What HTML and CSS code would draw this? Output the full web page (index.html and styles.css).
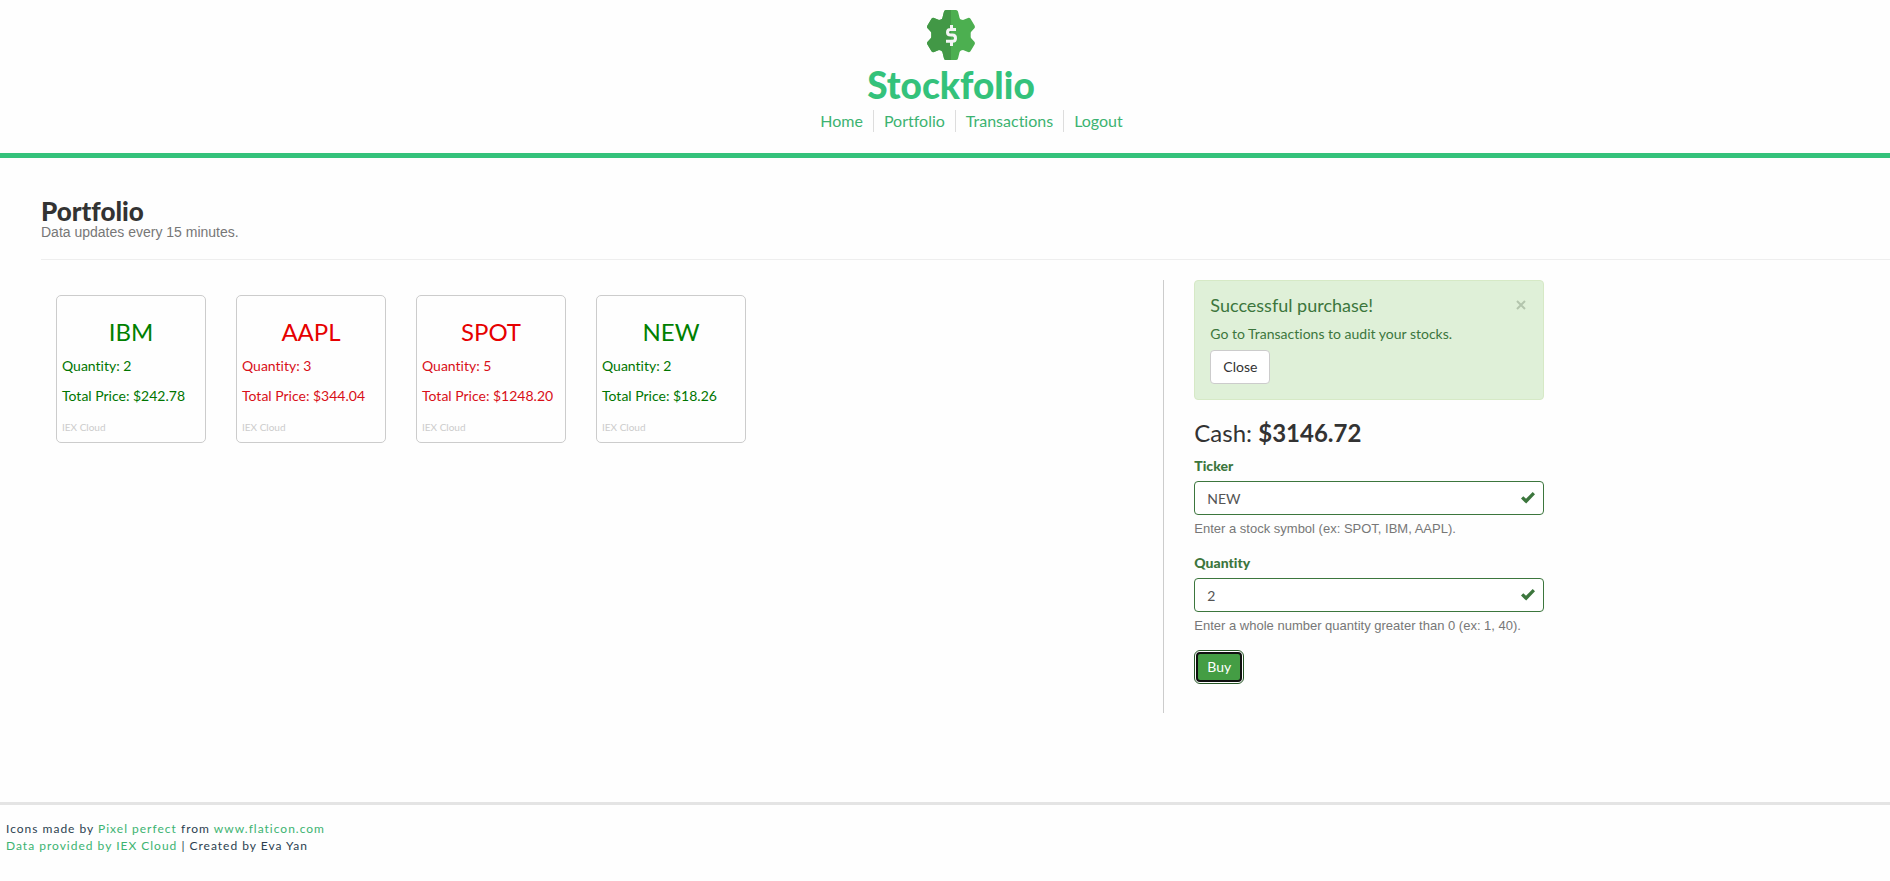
FILE: index.html
```html
<!DOCTYPE html>
<html lang="en">
<head>
<meta charset="utf-8">
<title>Stockfolio</title>
<meta name="viewport" content="width=device-width, initial-scale=1">
<link rel="stylesheet" href="styles.css">
</head>
<body>
<header class="site-header">
  <svg class="logo" viewBox="0 0 50 52" aria-hidden="true">
    <defs><clipPath id="left-half"><rect width="25" height="52"/></clipPath></defs>
    <path id="gear" fill="#4caf50" d="M20 1h10q1.500 0 2 1.500l1.600 6.500q.400 1 1.400 1.500l2 .500 5-2q1.500-.500 2.500.800l4.200 7q.700 1.500-.300 2.500l-3 3.200q-.700.700-.700 1.500v4q0 .800.700 1.500l3 3.200q1 1 .300 2.500l-4.200 7q-1 1.300-2.500.800l-5-2-2 .500q-1 .500-1.400 1.500L32 49.500q-.500 1.500-2 1.500H20q-1.500 0-2-1.500L16.400 43q-.400-1-1.400-1.500l-2-.500-5 2q-1.500.500-2.500-.800l-4.200-7q-.700-1.500.300-2.500l3-3.200q.700-.700.700-1.500v-4q0-.800-.700-1.500l-3-3.200q-1-1-.300-2.500l4.200-7q1-1.300 2.500-.800l5 2 2-.500q1-.500 1.400-1.500L18 2.500q.500-1.500 2-1.500z"/>
    <use href="#gear" clip-path="url(#left-half)" class="gear-shade"/>
    <path fill="none" stroke="#f5f5f5" stroke-width="3" stroke-linejoin="round" d="M30 20.500h-5.500q-3 0-3 2.800t3 2.800h2q3 0 3 3.100t-3 3.100H20M25.500 16v4M25.500 33v4"/>
  </svg>
  <h1 class="brand">Stockfolio</h1>
  <nav>
    <ul class="nav-list">
      <li><a href="#">Home</a></li>
      <li><a href="#">Portfolio</a></li>
      <li><a href="#">Transactions</a></li>
      <li><a href="#">Logout</a></li>
    </ul>
  </nav>
</header>
<main class="page">
  <div class="page-title">
    <h2>Portfolio</h2>
    <p>Data updates every 15 minutes.</p>
  </div>
  <div class="columns">
    <section class="holdings" aria-label="Holdings">
      <article class="card gain"><h3>IBM</h3><p>Quantity: 2</p><p>Total Price: $242.78</p><small>IEX Cloud</small></article>
      <article class="card loss"><h3>AAPL</h3><p>Quantity: 3</p><p>Total Price: $344.04</p><small>IEX Cloud</small></article>
      <article class="card loss"><h3>SPOT</h3><p>Quantity: 5</p><p>Total Price: $1248.20</p><small>IEX Cloud</small></article>
      <article class="card gain"><h3>NEW</h3><p>Quantity: 2</p><p>Total Price: $18.26</p><small>IEX Cloud</small></article>
    </section>
    <section class="trade" aria-label="Buy stocks">
      <div class="alert" role="alert">
        <div class="alert-head">
          <h4>Successful purchase!</h4>
          <button class="dismiss" type="button" aria-label="Dismiss"><svg viewBox="0 0 10 10" aria-hidden="true"><path d="M1 1l8 8M9 1L1 9"/></svg></button>
        </div>
        <p>Go to Transactions to audit your stocks.</p>
        <button class="btn btn-default" type="button">Close</button>
      </div>
      <h3 class="cash">Cash: <strong>$3146.72</strong></h3>
      <form>
        <div class="field">
          <label for="ticker">Ticker</label>
          <div class="control">
            <input id="ticker" type="text" value="NEW">
            <svg class="tick" viewBox="0 0 14 12" aria-hidden="true"><path d="M0 6.500L2.300 4.200 5 6.700 11.700 0 14 2.300 5.200 11.600z"/></svg>
          </div>
          <span class="help">Enter a stock symbol (ex: SPOT, IBM, AAPL).</span>
        </div>
        <div class="field">
          <label for="quantity">Quantity</label>
          <div class="control">
            <input id="quantity" type="text" value="2">
            <svg class="tick" viewBox="0 0 14 12" aria-hidden="true"><path d="M0 6.500L2.300 4.200 5 6.700 11.700 0 14 2.300 5.200 11.600z"/></svg>
          </div>
          <span class="help">Enter a whole number quantity greater than 0 (ex: 1, 40).</span>
        </div>
        <button class="btn btn-buy" type="button">Buy</button>
      </form>
    </section>
  </div>
</main>
<footer class="site-footer">
  <p>Icons made by <a href="#">Pixel perfect</a> from <a href="#">www.flaticon.com</a></p>
  <p><a href="#">Data provided by IEX Cloud</a> | Created by Eva Yan</p>
</footer>
</body>
</html>
```
FILE: styles.css
```css
* { box-sizing: border-box; }

body {
  margin: 0;
  background: #fefefe;
  color: #333;
  font: 400 14px/20px Lato, "Liberation Sans", sans-serif;
  font-variant-ligatures: none;
}

h1, h2, h3, h4, p, ul { margin: 0; }
a { color: #3cb371; text-decoration: none; }
button, input { font: inherit; }

.site-header {
  display: flex;
  flex-direction: column;
  align-items: center;
  padding: 9px 0 21px 12px;
  border-bottom: 5px solid #34c27b;
}
.logo { width: 50px; height: 52px; }
.gear-shade { filter: brightness(0.87); }
.brand {
  margin: 3px 0 4px;
  color: #34c27b;
  font-size: 37px;
  font-weight: 900;
  line-height: 42px;
}
.nav-list {
  display: flex;
  padding: 0 0 0 41px;
  list-style: none;
  font-size: 16px;
  line-height: 22px;
}
.nav-list li { padding: 0 10px; }
.nav-list li + li { border-left: 1px solid #ddd; }

.page { padding: 40px 0 89px 41px; }
.page-title {
  padding-bottom: 18px;
  border-bottom: 1px solid #eee;
}
.page-title h2 { font-size: 26px; font-weight: 900; line-height: 26px; }
.page-title p {
  color: #777;
  font: 14px/17px "Liberation Sans", sans-serif;
}

.columns { display: flex; padding-top: 20px; }
.holdings {
  display: flex;
  flex: 0 0 auto;
  flex-wrap: wrap;
  align-content: flex-start;
  gap: 30px;
  width: 60.7%;
  padding: 15px;
}
.card {
  width: 150px;
  padding: 23px 5px 3px;
  border: 1px solid #ccc;
  border-radius: 5px;
}
.card h3 {
  padding-bottom: 11px;
  font-size: 24px;
  font-weight: 400;
  line-height: 26px;
  text-align: center;
}
.card p { padding-bottom: 10px; white-space: nowrap; }
.card small { display: block; color: #ccc; font-size: 10px; line-height: 23px; }
.gain { color: #007500; }
.loss { color: #d80f18; }
.gain h3 { color: green; }
.loss h3 { color: #e60000; }

.trade {
  flex: 1;
  padding: 0 30px 29px;
  border-left: 1px solid #ccc;
}
.alert, .trade form { max-width: 350px; }
.alert {
  padding: 15px;
  background: #dff0d8;
  border: 1px solid #d6e9c6;
  border-radius: 4px;
  color: #3c763d;
}
.alert-head { display: flex; justify-content: space-between; }
.alert h4 { padding-bottom: 10px; font-size: 18px; font-weight: 400; line-height: 18px; }
.alert p { padding-bottom: 6px; }
.dismiss {
  width: 12px;
  height: 18px;
  padding: 0;
  background: none;
  border: 0;
}
.dismiss svg { display: block; width: 10px; height: 10px; fill: none; stroke: #b3c5ad; stroke-width: 2; }

.btn {
  display: block;
  height: 34px;
  padding: 0 12px;
  border-radius: 4px;
}
.btn-default { background: #fff; border: 1px solid #ccc; color: #333; }
.btn-buy {
  height: 30px;
  margin: 2px;
  padding: 0 9px;
  background: #449d44;
  border: 2px solid #101010;
  color: #fff;
  outline: 1px solid #255625;
  outline-offset: 1px;
}

.cash { padding: 20px 0 10px; font-size: 24px; font-weight: 400; line-height: 26px; }
.cash strong { font-weight: 700; }
.field { padding-bottom: 15px; }
.field label {
  display: block;
  padding-bottom: 5px;
  color: #3c763d;
  font-weight: 900;
}
.control { position: relative; }
.control input {
  display: block;
  width: 100%;
  height: 34px;
  padding: 6px 42px 6px 12px;
  background: #fff;
  border: 1px solid #3c763d;
  border-radius: 4px;
  color: #555;
}
.tick {
  position: absolute;
  top: 11px;
  right: 9px;
  width: 14px;
  height: 12px;
  fill: #3c763d;
}
.help {
  display: block;
  padding-top: 5px;
  color: #777;
  font: 13px/18px "Liberation Sans", sans-serif;
}

.site-footer {
  padding: 15px 6px;
  border-top: 3px solid #e4e4e4;
  color: #2c3e50;
  font-size: 12px;
  letter-spacing: 1px;
  line-height: 17px;
}
```
